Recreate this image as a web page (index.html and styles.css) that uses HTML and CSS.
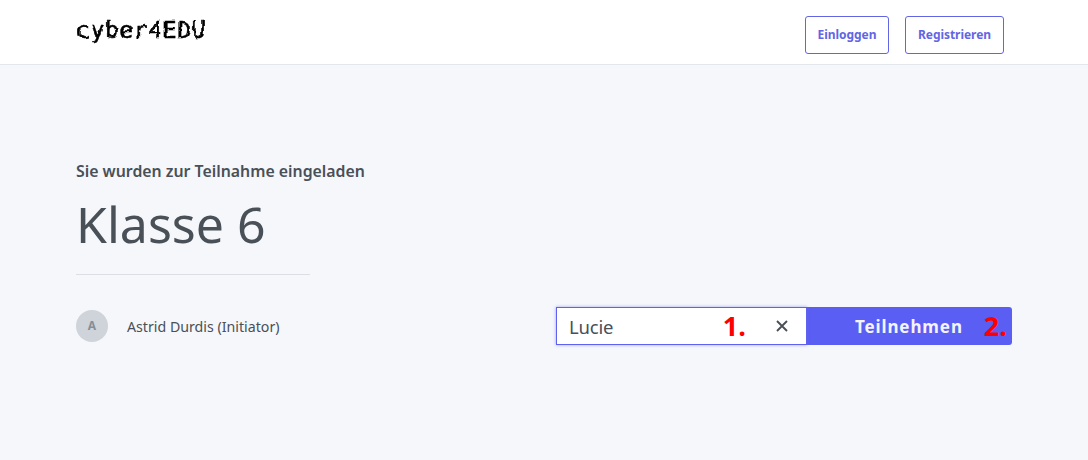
FILE: index.html
```html
<!DOCTYPE html>
<html lang="de">
<head>
<meta charset="utf-8">
<title>cyber4EDU</title>
<link rel="stylesheet" href="styles.css">
</head>
<body>
<svg class="defs" width="0" height="0" aria-hidden="true"><filter id="rough" x="-5%" y="-20%" width="110%" height="140%"><feTurbulence type="fractalNoise" baseFrequency="0.12" numOctaves="2" seed="7" result="n"/><feDisplacementMap in="SourceGraphic" in2="n" scale="4" xChannelSelector="R" yChannelSelector="G"/></filter></svg>
<header class="topbar">
  <a class="logo">cyber4EDU</a>
  <nav class="nav">
    <a class="nav-btn nav-login">Einloggen</a>
    <a class="nav-btn nav-register">Registrieren</a>
  </nav>
</header>
<main class="main">
  <p class="invite">Sie wurden zur Teilnahme eingeladen</p>
  <h1 class="title">Klasse 6</h1>
  <hr class="rule">
  <div class="row">
    <div class="person">
      <span class="avatar">A</span>
      <span class="person-name">Astrid Durdis (Initiator)</span>
    </div>
    <form class="join">
      <div class="field">
        <span class="field-value">Lucie</span>
        <span class="mark mark-one">1.</span>
        <svg class="clear" width="12" height="12" viewBox="0 0 12 12"><path d="M1 1l10 10M11 1L1 11"/></svg>
      </div>
      <div class="submit">
        <span class="submit-label">Teilnehmen</span>
        <span class="mark mark-two">2.</span>
      </div>
    </form>
  </div>
</main>
</body>
</html>
```
FILE: styles.css
```css
* { box-sizing: border-box; }
html, body { margin: 0; height: 100%; }
body {
  background: #f5f7fb;
  font-family: "Noto Sans", "Open Sans", sans-serif;
  color: #495057;
  overflow: hidden;
}
.defs { position: absolute; }
.topbar {
  height: 65px;
  background: #fff;
  border-bottom: 1px solid #e4e6ee;
  display: flex;
  justify-content: space-between;
  padding: 0 84px 0 76px;
}
.logo {
  margin-top: 15px;
  font: 400 23px/30px "DejaVu Sans Mono", monospace;
  letter-spacing: 0.6px;
  color: #000;
  -webkit-text-stroke: 0.5px #000;
  filter: url(#rough);
  height: 30px;
}
.nav { display: flex; gap: 16px; padding-top: 16px; }
.nav-btn {
  height: 38px;
  border: 1px solid #6265e4;
  border-radius: 3px;
  color: #6265e4;
  font-size: 12px;
  font-weight: 700;
  line-height: 36px;
  text-align: center;
  letter-spacing: -0.05px;
}
.nav-login { width: 84px; }
.nav-register { width: 99px; }
.main { padding: 96px 76px 0; }
.invite {
  margin: 0;
  font-size: 15.85px;
  font-weight: 600;
  line-height: 20px;
}
.title {
  margin: 12px 0 0;
  font-size: 50px;
  font-weight: 400;
  line-height: 62px;
}
.rule {
  width: 234px;
  height: 1px;
  margin: 19px 0 0;
  border: 0;
  background: #dcdee4;
}
.row {
  display: flex;
  justify-content: space-between;
  align-items: center;
  margin-top: 32px;
}
.person { display: flex; align-items: center; gap: 19px; }
.avatar {
  width: 32px;
  height: 32px;
  border-radius: 50%;
  background: #ced4da;
  color: #868e96;
  font-size: 12px;
  font-weight: 700;
  line-height: 32px;
  text-align: center;
}
.person-name { font-size: 14.2px; }
.join { display: flex; width: 456px; height: 38px; }
.field {
  width: 251px;
  background: #fff;
  border: 1px solid #5f62ee;
  box-shadow: 0 0 3px rgba(98, 101, 228, .6);
  display: flex;
  align-items: center;
  padding: 0 18px 0 12px;
  position: relative;
  z-index: 1;
}
.field-value { font-size: 18.5px; letter-spacing: -0.2px; flex: 1; }
.mark {
  font-family: "Open Sans", sans-serif;
  font-size: 27px;
  font-weight: 700;
  color: #f00;
  line-height: 38px;
}
.mark-one { margin-right: 30px; }
.clear { fill: none; stroke: #495057; stroke-width: 1.9; }
.submit {
  flex: 1;
  background: #5b5ef2;
  border-radius: 0 3px 3px 0;
  display: flex;
  align-items: center;
  justify-content: flex-end;
  padding-right: 5px;
}
.submit-label {
  color: #f3f4ff;
  font-size: 17px;
  font-weight: 700;
  letter-spacing: 0.9px;
  margin-right: 21px;
}
```
